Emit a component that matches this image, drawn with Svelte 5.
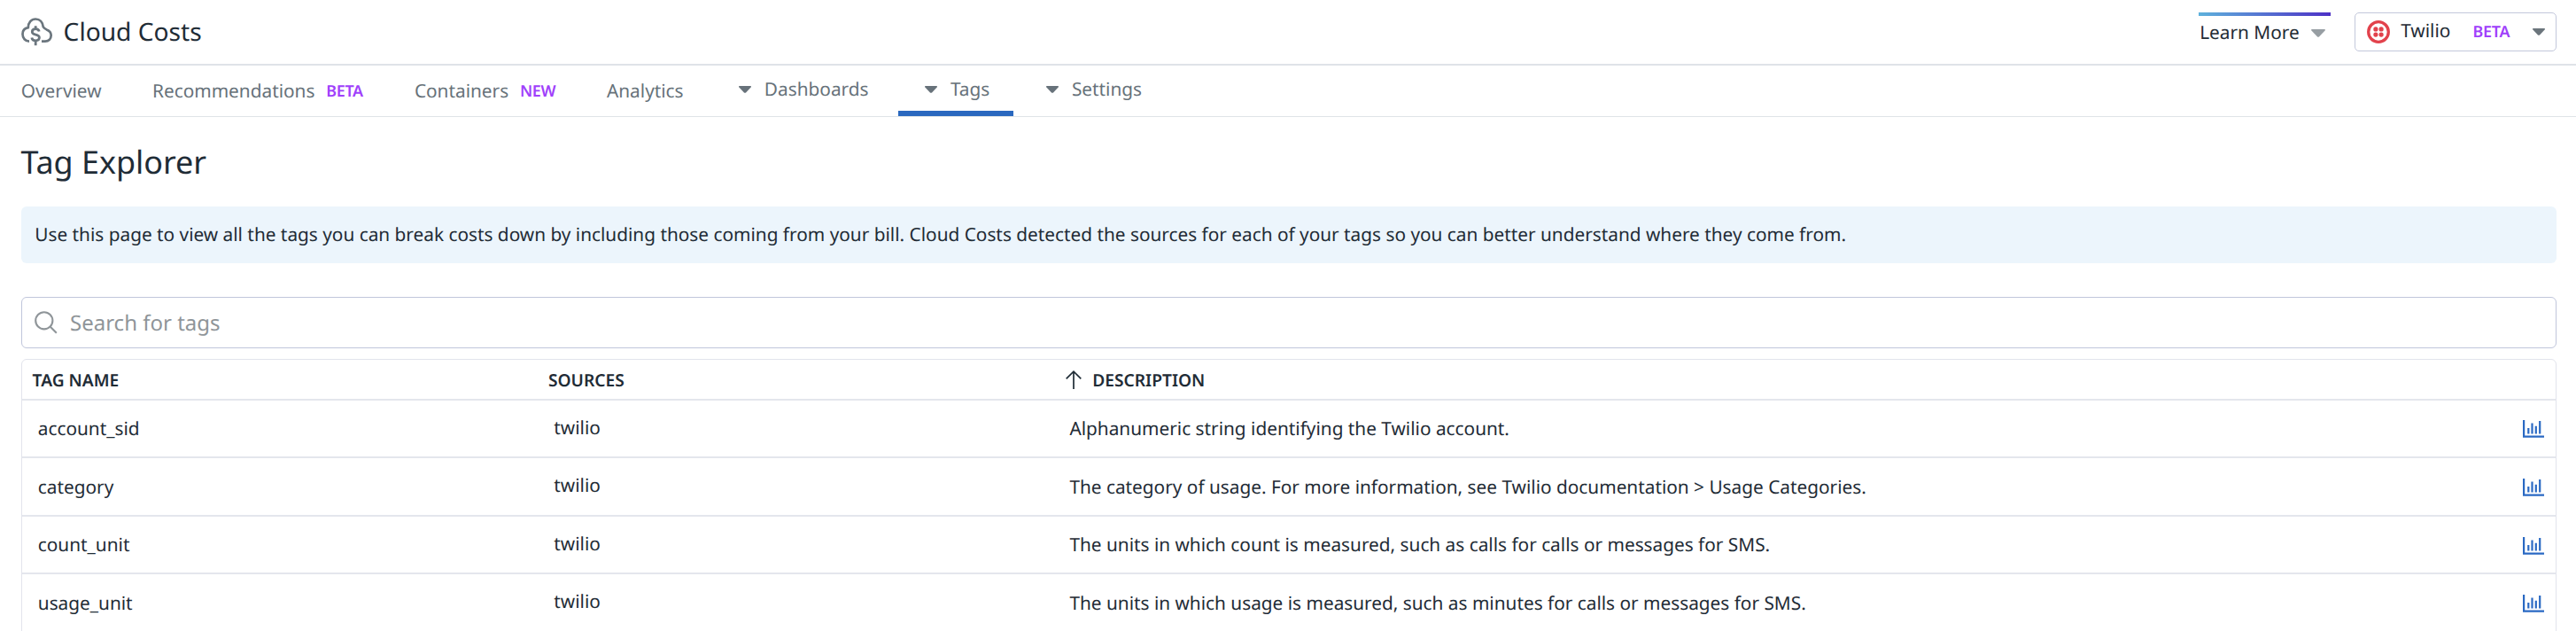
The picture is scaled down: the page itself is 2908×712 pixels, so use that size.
<script>
  const rows = [
    { name: 'account_sid', source: 'twilio', description: 'Alphanumeric string identifying the Twilio account.' },
    { name: 'category', source: 'twilio', description: 'The category of usage. For more information, see Twilio documentation > Usage Categories.' },
    { name: 'count_unit', source: 'twilio', description: 'The units in which count is measured, such as calls for calls or messages for SMS.' },
    { name: 'usage_unit', source: 'twilio', description: 'The units in which usage is measured, such as minutes for calls or messages for SMS.' }
  ];
  const links = [
    { label: 'Overview' },
    { label: 'Recommendations', badge: 'BETA' },
    { label: 'Containers', badge: 'NEW' },
    { label: 'Analytics' }
  ];
  const menus = [
    { label: 'Dashboards' },
    { label: 'Tags', active: true },
    { label: 'Settings' }
  ];
</script>

{#snippet caret(w, h)}
  <svg class="caret" width={w} height={h} viewBox="0 0 16 9" preserveAspectRatio="none">
    <path d="M0.6 0H15.4Q16.4 0.7 15.6 1.6L9.2 8.3Q8 9.4 6.8 8.3L0.4 1.6Q-0.4 0.7 0.6 0Z" fill="currentColor" />
  </svg>
{/snippet}

<div class="page">
  <header>
    <svg class="cloud" width="36" height="32" viewBox="0 0 36 32" fill="none" stroke="currentColor" stroke-width="2.7">
      <path d="M9 26.6C4.6 26.6 1.5 23 1.5 18.6C1.5 14.6 4 11.8 7.8 11.2C7.8 5.4 11.4 1.5 16.2 1.5C21 1.5 24.2 5 24.8 10.4C25.6 11.8 27 12.6 28.6 13.4C32 14.6 33.7 17 33.7 19.8C33.7 23.8 31 26.6 27 26.6H23" />
      <path d="M20.2 15.6C19.8 13.5 18.4 12.7 16.2 12.7C13.9 12.7 12.3 14 12.3 15.9C12.3 20.6 20.4 17.4 20.4 22.3C20.4 24.5 18.8 25.8 16.2 25.8C13.8 25.8 12.2 24.5 11.8 22.4M16.2 9.2V13M16.2 25.6V31.2" stroke-width="2.8" />
    </svg>
    <span class="app">Cloud Costs</span>
    <div class="learn"><span>Learn More</span>{@render caret(16, 9)}</div>
    <div class="provider">
      <svg width="26" height="26" viewBox="0 0 26 26">
        <circle cx="13" cy="13" r="11.3" fill="none" stroke="#e2424c" stroke-width="3.3" />
        <g fill="#e2424c">
          <circle cx="9.9" cy="9.9" r="2.6" /><circle cx="16.1" cy="9.9" r="2.6" />
          <circle cx="9.9" cy="16.1" r="2.6" /><circle cx="16.1" cy="16.1" r="2.6" />
        </g>
      </svg>
      <span class="pname">Twilio</span>
      <span class="badge">BETA</span>
      {@render caret(14, 8)}
    </div>
  </header>

  <nav>
    {#each links as link}
      <div class="item"><span>{link.label}</span>{#if link.badge}<span class="badge">{link.badge}</span>{/if}</div>
    {/each}
    {#each menus as menu}
      <div class="item menu" class:active={menu.active}>{@render caret(14, 8)}<span>{menu.label}</span></div>
    {/each}
  </nav>

  <main>
    <h1>Tag Explorer</h1>
    <div class="banner">Use this page to view all the tags you can break costs down by including those coming from your bill. Cloud Costs detected the sources for each of your tags so you can better understand where they come from.</div>
    <div class="search">
      <svg width="26" height="26" viewBox="0 0 26 26" fill="none" stroke="currentColor" stroke-width="2.1">
        <circle cx="10.8" cy="10.8" r="9.6" /><path d="M17.6 17.6L24.8 24.8" />
      </svg>
      <span>Search for tags</span>
    </div>
    <div class="table">
      <div class="row head">
        <span>TAG NAME</span>
        <span>SOURCES</span>
        <span class="sorted">
          <svg width="18" height="21" viewBox="0 0 18 21" fill="none" stroke="currentColor" stroke-width="1.7"><path d="M9 21V1.2M0.7 9.3L9 1.2L17.3 9.3" /></svg>
          <span>DESCRIPTION</span>
        </span>
      </div>
      {#each rows as row}
        <div class="row">
          <span class="name">{row.name}</span>
          <span class="source">{row.source}</span>
          <span class="desc">{row.description}</span>
          <svg class="chart" width="24" height="20" viewBox="0 0 24 20" fill="none" stroke="currentColor" stroke-width="2.2">
            <path d="M1.1 0V18.6H24M6.3 15.5V9M10.5 15.5V3.5M14.8 15.5V6.8M19.2 15.5V1" />
          </svg>
        </div>
      {/each}
    </div>
  </main>
</div>

<style>
  :global(body) { overflow: hidden; }
  .page {
    width: 2908px;
    height: 712px;
    overflow: hidden;
    background: #fff;
    color: #1f2c36;
    font: 400 20.8px/30px "Noto Sans", sans-serif;
    text-rendering: geometricPrecision;
  }
  svg { display: block; flex: none; }
  header {
    box-sizing: border-box;
    height: 74px;
    padding: 0 22px 0 24px;
    display: flex;
    align-items: center;
    border-bottom: 2px solid #dfe3e8;
  }
  .cloud { color: #6b767e; }
  .app { font-size: 28.15px; margin: 0 auto 0 11.6px; }
  .learn {
    box-sizing: border-box;
    width: 149.5px;
    height: 44px;
    margin-right: 27px;
    padding: 0 6px 0 1.7px;
    display: flex;
    align-items: center;
    justify-content: space-between;
    border-top: 4px solid;
    border-bottom: 4px solid transparent;
    border-image: linear-gradient(90deg, #5eb1dc, #4d31c6) 4 0 0 0;
  }
  .learn span { padding-top: 2px; }
  .learn .caret { color: #979ea3; margin-top: 2px; }
  .provider {
    box-sizing: border-box;
    width: 228px;
    height: 44px;
    padding: 0 12px 1px 13px;
    display: flex;
    align-items: center;
    border: 1px solid #c3c8db;
    border-radius: 5px;
  }
  .pname { margin: 0 0 1px 12.2px; }
  .badge { color: #a040fb; font-size: 17.9px; font-weight: 600; letter-spacing: -0.3px; }
  .provider .badge { margin-left: 25px; letter-spacing: -0.2px; }
  .provider .caret { margin-left: auto; color: #6b757c; }
  nav {
    box-sizing: border-box;
    height: 58px;
    padding-left: 23.8px;
    display: grid;
    grid-template-columns: 148.2px 295.9px 217.1px 118.9px 210.1px 137px 160px;
    border-bottom: 1px solid #e0e4e7;
    color: #67727a;
  }
  .item { display: flex; align-items: center; }
  .item .badge { margin-left: 12.8px; }
  .menu { padding: 0 0 4px 30px; }
  .menu .caret { margin-right: 15px; }
  .active {
    box-sizing: border-box;
    width: 130px;
    padding: 2px 0 0 30px;
    border-bottom: 6px solid #2a68bf;
  }
  main { padding: 0 22px 0 24px; }
  h1 { margin: 0 0 26px -0.6px; padding-top: 26px; font-size: 35.9px; line-height: 49px; font-weight: 400; }
  .banner {
    box-sizing: border-box;
    height: 64px;
    padding: 17px 15.3px 0;
    border-radius: 6px;
    background: #ecf5fc;
  }
  .search {
    box-sizing: border-box;
    height: 58px;
    margin: 38px 0 12px;
    padding-left: 14px;
    display: flex;
    align-items: center;
    gap: 14px;
    border: 1px solid #c0c6db;
    border-radius: 6px;
    color: #8f9599;
    font-size: 24px;
  }
  .search span { padding-top: 1px; }
  .table {
    height: 340px;
    border: 1px solid #e2e4ec;
    border-radius: 6px;
  }
  .row {
    --lead: 18px;
    box-sizing: border-box;
    height: 66px;
    padding-top: 16px;
    display: grid;
    grid-template-columns: 582.3px 582.3px 1fr auto;
    align-items: start;
    border-bottom: 2px solid #e4e6ed;
  }
  .row:nth-child(2), .row:nth-child(4) { --lead: 17px; height: 65px; }
  .name, .desc { padding-top: calc(var(--lead) - 16px); }
  .head { height: 46px; font-size: 19.2px; font-weight: 600; padding: 7.5px 0 0 11.6px; }
  .sorted { display: flex; align-items: center; gap: 12px; padding-left: 2px; }
  .name { padding-left: 17.8px; }
  .source { padding-left: 18px; }
  .desc { padding-left: 17.8px; }
  .chart { color: #2a69c3; margin: 7px 13px 0 0; }
  .row:nth-child(2) .chart { margin-top: 6px; }
</style>
